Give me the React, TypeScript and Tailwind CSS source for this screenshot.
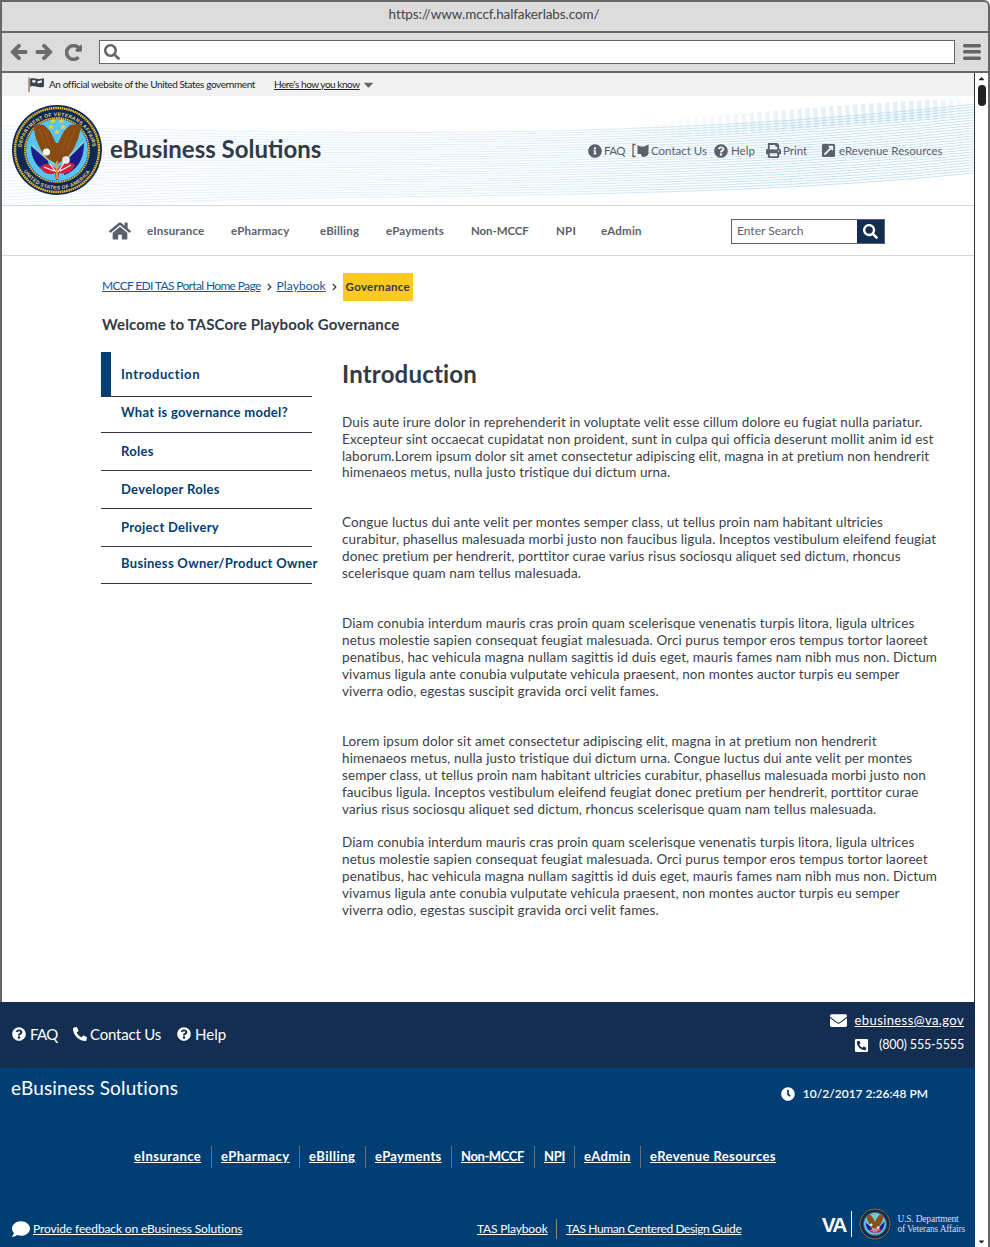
import React from "react";
import {
  FaArrowLeft, FaArrowRight, FaRedoAlt, FaSearch, FaInfoCircle, FaQuestionCircle, FaPrint,
  FaExternalLinkSquareAlt, FaHome, FaEnvelope, FaPhoneSquareAlt, FaPhoneAlt, FaClock, FaCaretDown, FaCaretUp, FaChevronRight, FaComment,
} from "react-icons/fa";

const Seal = ({ size, id, text = true }: { size: number; id: string; text?: boolean }) => (
  <svg width={size} height={size} viewBox="0 0 90 90" className="shrink-0">
    <circle cx="45" cy="45" r="45" fill="#0b2a55" />
    <circle cx="45" cy="45" r="42" fill="none" stroke="#f2b632" strokeWidth="2.4" strokeDasharray="1.6 0.6" />
    <circle cx="45" cy="45" r="32" fill="none" stroke="#f2b632" strokeWidth="1.8" strokeDasharray="1.6 0.6" />
    <circle cx="45" cy="45" r="31" fill="#57c4f5" />
    <path d="M19 41 L36 56 L38 68 C28 66 19 56 19 41Z" fill="#1c1c8a" />
    <path d="M72 38 L54 56 L52 70 C64 66 72 56 72 38Z" fill="#1c1c8a" />
    <path d="M20 40 L42 60 M71 37 L49 60" stroke="#e6cf7a" strokeWidth="0.9" />
    <path d="M45 59 L36 54 L29 45 L24 34 L21 19 L32 20 L38 26 L44 38 L46 38 L52 26 L58 20 L70 19 L66 34 L61 45 L54 54Z" fill="#8a4b12" />
    <path d="M27 24 L35 44 M33 25 L40 46 M63 24 L55 44 M57 25 L50 46" stroke="#a0601f" strokeWidth="0.7" />
    <circle cx="34.5" cy="47" r="3.6" fill="#f6f6f6" />
    <path d="M28 62 C33 57 39 58 45 65 C50 58 56 55 63 60 C60 67 54 70 47 68 L46 75 L44 75 L43 68 C37 71 31 68 28 62Z" fill="#d5203f" />
    <path d="M32 62 L42 66 M59 60 L48 66 M38 59 L44 67 M52 58 L46 67" stroke="#fff" strokeWidth="1.2" />
    <circle cx="54" cy="55" r="3.8" fill="#eee" />
    <path d="M45 56 L45 74" stroke="#e5a92a" strokeWidth="1.6" />
    <path d="M41 13l.9 1.900 2 .2-1.500 1.300.5 2-1.900-1.100-1.900 1.100.5-2-1.500-1.300 2-.2zM49.500 13l.9 1.900 2 .2-1.500 1.300.5 2-1.900-1.100-1.900 1.100.5-2-1.500-1.300 2-.2zM39 19l.9 1.900 2 .2-1.500 1.300.5 2-1.900-1.100-1.900 1.100.5-2-1.500-1.300 2-.2zM51 19l.9 1.900 2 .2-1.500 1.300.5 2-1.900-1.100-1.900 1.100.5-2-1.500-1.300 2-.2zM45 24l.9 1.900 2 .2-1.500 1.300.5 2-1.900-1.100-1.900 1.100.5-2-1.500-1.300 2-.2z" fill="#f2d040" />
    {text && (
      <>
        <defs>
          <path id={id + "t"} d="M9 47 A36 36 0 0 1 81 47" />
          <path id={id + "b"} d="M5.500 45 A39.500 39.500 0 0 0 84.500 45" />
        </defs>
        <text fontSize="5" fill="#e9d07a" fontFamily="'Liberation Sans', sans-serif" fontWeight="700" letterSpacing="0.3">
          <textPath href={`#${id}t`} startOffset="50%" textAnchor="middle">DEPARTMENT OF VETERANS AFFAIRS</textPath>
        </text>
        <text fontSize="5" fill="#e9d07a" fontFamily="'Liberation Sans', sans-serif" fontWeight="700" letterSpacing="0.3">
          <textPath href={`#${id}b`} startOffset="50%" textAnchor="middle">UNITED STATES OF AMERICA</textPath>
        </text>
      </>
    )}
  </svg>
);

const Waves = () => {
  const low: string[] = [];
  const N = 26;
  for (let i = 0; i <= N; i++) {
    const t = i / N;
    const l = (a: number, b: number) => a + (b - a) * t;
    low.push(`M0 ${l(30, 114)} C325 ${l(39, 92)} 650 ${l(44, 110)} 975 ${l(8, 77)}`);
  }
  return (
    <svg width="973" height="109" viewBox="0 0 975 109" className="absolute left-0 top-0">
      <defs>
        <linearGradient id="wl" gradientUnits="userSpaceOnUse" x1="0" y1="0" x2="975" y2="0">
          <stop offset="0" stopColor="#a9d5e9" stopOpacity="0.3" />
          <stop offset="0.55" stopColor="#a9d5e9" stopOpacity="0.5" />
          <stop offset="0.8" stopColor="#a9d5e9" stopOpacity="0.85" />
          <stop offset="1" stopColor="#a9d5e9" stopOpacity="0.8" />
        </linearGradient>
        <linearGradient id="wa" gradientUnits="userSpaceOnUse" x1="630" y1="0" x2="975" y2="0">
          <stop offset="0" stopColor="#d8e8f2" stopOpacity="0" />
          <stop offset="0.5" stopColor="#d8e8f2" stopOpacity="0.6" />
          <stop offset="0.85" stopColor="#d8e8f2" stopOpacity="0.7" />
          <stop offset="1" stopColor="#d8e8f2" stopOpacity="0" />
        </linearGradient>
      </defs>
      <path d="M630 36 C730 30 850 16 975 12" fill="none" stroke="url(#wa)" strokeWidth="20" strokeDasharray="4.500 3.500" />
      {low.map((d, i) => (
        <path key={i} d={d} fill="none" stroke="url(#wl)" strokeWidth="0.8" />
      ))}
    </svg>
  );
};

const P = ({ lines, className = "" }: { lines: string[]; className?: string }) => (
  <div className={className}>
    {lines.map((l) => (
      <div key={l} className="whitespace-nowrap h-[16.8px] leading-[16.8px]">{l}</div>
    ))}
  </div>
);

const diam = [
  "Diam conubia interdum mauris cras proin quam scelerisque venenatis turpis litora, ligula ultrices",
  "netus molestie sapien consequat feugiat malesuada. Orci purus tempor eros tempus tortor laoreet",
  "penatibus, hac vehicula magna nullam sagittis id duis eget, mauris fames nam nibh mus non. Dictum",
  "vivamus ligula ante conubia vulputate vehicula praesent, non montes auctor turpis eu semper",
  "viverra odio, egestas suscipit gravida orci velit fames.",
];

const side: [string, string][] = [
  ["What is governance model?", "h-[36px] pb-[4px]"],
  ["Roles", "h-[38px]"],
  ["Developer Roles", "h-[38px]"],
  ["Project Delivery", "h-[38px]"],
  ["Business Owner/Product Owner", "h-[37px] pb-[3px]"],
];

const navs: [string, string][] = [
  ["eInsurance", "w-[84px]"],
  ["ePharmacy", "w-[89px]"],
  ["eBilling", "w-[66px]"],
  ["ePayments", "w-[85px]"],
  ["Non-MCCF", "w-[85px] tracking-[-0.1px]"],
  ["NPI", "w-[45px]"],
  ["eAdmin", "w-[130px]"],
];

const footNav: [string, string][] = [
  ["eInsurance", "w-[77px] tracking-[0.45px]"],
  ["ePharmacy", "w-[88px] tracking-[0.5px]"],
  ["eBilling", "w-[66px] tracking-[0.5px]"],
  ["ePayments", "w-[86px] tracking-[0.35px]"],
  ["Non-MCCF", "w-[83px] tracking-[-0.4px]"],
  ["NPI", "w-[40px] tracking-[-0.3px]"],
  ["eAdmin", "w-[66px] tracking-[0.35px]"],
  ["eRevenue Resources", "w-[140px] tracking-[0.4px]"],
];

export default function App() {
  return (
    <div className="w-[990px] h-[1247px] overflow-hidden bg-white flex flex-col font-['Lato','Noto_Sans',sans-serif] text-[#323a45]">
      <div className="h-[33px] shrink-0 bg-[#dcdcdc] border-t-2 border-x-2 border-b-2 border-[#666] rounded-tr-[6px] flex justify-center items-center pb-[5px]">
        <span className="text-[13.5px] tracking-[-0.1px] text-[#444] -ml-[2px]">https://www.mccf.halfakerlabs.com/</span>
      </div>
      <div className="h-[40px] shrink-0 bg-[#dcdcdc] border-x-2 border-b-2 border-[#666] flex items-center text-[#6b6b6b]">
        <FaArrowLeft className="ml-[8px] w-[18px] h-[18px] [stroke-width:30]" />
        <FaArrowRight className="ml-[7px] w-[18px] h-[18px] [stroke-width:30]" />
        <FaRedoAlt className="ml-[12px] w-[17px] h-[17px] [stroke-width:30]" />
        <div className="ml-[17px] w-[856px] h-[24px] bg-white border border-[#666] flex items-center pl-[4px]">
          <FaSearch className="w-[16px] h-[16px] text-[#666]" />
        </div>
        <svg width="18" height="16" viewBox="0 0 18 16" className="ml-[8px] shrink-0" fill="#666">
          <rect x="0" y="0" width="18" height="3.600" rx="1.500" />
          <rect x="0" y="6" width="18" height="3.600" rx="1.500" />
          <rect x="0" y="12.400" width="18" height="3.600" rx="1.500" />
        </svg>
      </div>
      <div className="flex-1 flex min-h-0 border-l-2 border-[#666]">
        <div className="w-[972px] flex flex-col min-h-0 border-r border-[#333] box-content">
          <div className="h-[23px] shrink-0 bg-[#f1f1f1] flex items-center pl-[26px] text-[10px] text-[#222]">
            <svg width="17" height="15" viewBox="0 0 16 14" className="shrink-0">
              <path d="M1 0.5 V14" stroke="#8a6a3a" strokeWidth="1.200" />
              <path d="M2 1.500 C5 0 8 3 15 1 V9 C9 11 6 7 2 9Z" fill="#39424d" />
              <path d="M4 3h3v2H4zM9 4l4-1v2l-4 1z" fill="#fff" />
            </svg>
            <span className="ml-[4px] whitespace-nowrap w-[225px] tracking-[-0.4px]">An official website of the United States government</span>
            <span className="underline whitespace-nowrap tracking-[-0.45px]">Here's how you know</span>
            <FaCaretDown className="ml-[1px] w-[15px] h-[15px] text-[#666]" />
          </div>
          <div className="relative h-[110px] shrink-0 flex items-center border-b border-[#d6d7d9] overflow-hidden">
            <Waves />
            <div className="relative ml-[10px] -mt-[1px]"><Seal size={90} id="a" /></div>
            <h1 className="relative ml-[8px] -mt-[4px] text-[24px] font-bold text-[#323a45] whitespace-nowrap">eBusiness Solutions</h1>
            <div className="absolute left-[586px] top-[46px] flex items-center text-[11.5px] text-[#5b616b] whitespace-nowrap">
              <FaInfoCircle className="w-[14px] h-[14px] shrink-0" />
              <span className="ml-[2px] w-[28px] tracking-[-0.6px]">FAQ</span>
              <svg width="18" height="15" viewBox="0 0 18 15" className="shrink-0">
                <path d="M3.500 1.500H1V13.500H3.500" fill="none" stroke="#7a5b3b" strokeWidth="1.300" />
                <path d="M5.500 2c2 1 3 1.500 5 1.500S14.500 3 16.500 1V11c-1 2-3 3-5.500 3-1 0-2-2-2-3H5.500z" fill="#5b616b" />
              </svg>
              <span className="ml-[1px] w-[63px]">Contact Us</span>
              <FaQuestionCircle className="w-[14px] h-[14px] shrink-0" />
              <span className="ml-[3px] w-[35px]">Help</span>
              <FaPrint className="w-[15px] h-[15px] shrink-0" />
              <span className="ml-[2px] w-[38px]">Print</span>
              <FaExternalLinkSquareAlt className="w-[15px] h-[15px] shrink-0" />
              <span className="ml-[3px]">eRevenue Resources</span>
            </div>
          </div>
          <div className="h-[50px] shrink-0 flex items-center border-b border-[#d6d7d9] text-[#5b616b]">
            <FaHome className="ml-[107px] w-[22px] h-[20px] shrink-0" />
            <div className="ml-[16px] flex text-[11.5px] font-bold tracking-[0.2px]">
              {navs.map(([n, w]) => (
                <span key={n} className={w}>{n}</span>
              ))}
            </div>
            <div className="w-[154px] h-[25px] mt-[1px] border border-[#5b616b] flex items-center">
              <span className="flex-1 pl-[5px] text-[12px] text-[#5b616b]">Enter Search</span>
              <div className="w-[27px] h-full bg-[#112e51] flex items-center justify-center">
                <FaSearch className="w-[15px] h-[15px] text-white" />
              </div>
            </div>
          </div>
          <div className="flex-1 min-h-0 pl-[100px] pt-[17px]">
            <div className="flex items-center h-[28px] text-[12px]">
              <a className="mb-[2px] underline text-[#0b5a9c] whitespace-nowrap tracking-[-0.65px]">MCCF EDI TAS Portal Home Page</a>
              <FaChevronRight className="ml-[5px] w-[7px] h-[8px] text-[#333]" />
              <a className="mb-[2px] ml-[4px] underline text-[#0b5a9c] tracking-[0.1px]">Playbook</a>
              <FaChevronRight className="ml-[5px] w-[7px] h-[8px] text-[#333]" />
              <span className="ml-[5px] w-[70px] h-[28px] bg-[#fdc822] flex items-center justify-center text-[11.5px] font-bold text-[#323a45] tracking-[0.3px]">Governance</span>
            </div>
            <h2 className="mt-[13px] h-[20px] leading-[20px] text-[15px] font-bold text-[#323a45] whitespace-nowrap tracking-[0.15px]">Welcome to TASCore Playbook Governance</h2>
            <div className="mt-[18px] flex">
              <div className="w-[211px] shrink-0 -ml-[1px] text-[13px] font-bold text-[#003e73] tracking-[0.3px]">
                <div className="h-[45px] border-b border-[#323a45] relative flex items-center pl-[20px] pt-[1px] whitespace-nowrap tracking-[0.6px]">
                  <span className="absolute left-0 top-0 bottom-0 w-[10px] bg-[#003e73]" />
                  Introduction
                </div>
                {side.map(([s, c]) => (
                  <div key={s} className={`${c} border-b border-[#323a45] flex items-center pl-[20px] whitespace-nowrap`}>{s}</div>
                ))}
              </div>
              <div className="ml-[30px] w-[600px] text-[13.5px] tracking-[0.1px] text-[#3a3f47]">
                <h2 className="h-[45px] leading-[44px] text-[24px] font-bold whitespace-nowrap tracking-[0.2px] text-[#323a45]">Introduction</h2>
                <P className="mt-[17px]" lines={[
                  "Duis aute irure dolor in reprehenderit in voluptate velit esse cillum dolore eu fugiat nulla pariatur.",
                  "Excepteur sint occaecat cupidatat non proident, sunt in culpa qui officia deserunt mollit anim id est",
                  "laborum.Lorem ipsum dolor sit amet consectetur adipiscing elit, magna in at pretium non hendrerit",
                  "himenaeos metus, nulla justo tristique dui dictum urna.",
                ]} />
                <P className="mt-[33px]" lines={[
                  "Congue luctus dui ante velit per montes semper class, ut tellus proin nam habitant ultricies",
                  "curabitur, phasellus malesuada morbi justo non faucibus ligula. Inceptos vestibulum eleifend feugiat",
                  "donec pretium per hendrerit, porttitor curae varius risus sociosqu aliquet sed dictum, rhoncus",
                  "scelerisque quam nam tellus malesuada.",
                ]} />
                <P className="mt-[34px]" lines={diam} />
                <P className="mt-[34px]" lines={[
                  "Lorem ipsum dolor sit amet consectetur adipiscing elit, magna in at pretium non hendrerit",
                  "himenaeos metus, nulla justo tristique dui dictum urna. Congue luctus dui ante velit per montes",
                  "semper class, ut tellus proin nam habitant ultricies curabitur, phasellus malesuada morbi justo non",
                  "faucibus ligula. Inceptos vestibulum eleifend feugiat donec pretium per hendrerit, porttitor curae",
                  "varius risus sociosqu aliquet sed dictum, rhoncus scelerisque quam nam tellus malesuada.",
                ]} />
                <P className="mt-[17px]" lines={diam} />
              </div>
            </div>
          </div>
          <div className="h-[66px] shrink-0 -ml-[2px] -mr-[1px] bg-[#132e51] text-white flex justify-between pl-[12px] pr-[11px]">
            <div className="flex items-center text-[15px] mt-[-2px] whitespace-nowrap">
              <FaQuestionCircle className="w-[14px] h-[14px] shrink-0" />
              <span className="ml-[4px] w-[43px] tracking-[-0.6px]">FAQ</span>
              <FaPhoneAlt className="w-[14px] h-[14px] shrink-0" />
              <span className="ml-[3px] w-[87px] tracking-[-0.2px]">Contact Us</span>
              <FaQuestionCircle className="w-[14px] h-[14px] shrink-0" />
              <span className="ml-[4px]">Help</span>
            </div>
            <div className="flex flex-col items-end pt-[10px] text-[13px]">
              <div className="flex items-center h-[17px]">
                <FaEnvelope className="w-[17px] h-[17px] shrink-0" />
                <span className="ml-[8px] underline tracking-[0.4px]">ebusiness@va.gov</span>
              </div>
              <div className="flex items-center h-[17px] mt-[8px]">
                <FaPhoneSquareAlt className="w-[15px] h-[15px] shrink-0" />
                <span className="ml-[10px] text-[12.5px] tracking-[-0.15px]">(800) 555-5555</span>
              </div>
            </div>
          </div>
          <div className="h-[179px] shrink-0 -ml-[2px] -mr-[1px] bg-[#003e73] text-white flex flex-col">
            <div className="flex justify-between h-[58px] pl-[11px] pr-[47px]">
              <span className="text-[19px] leading-[24px] pt-[8px] box-content h-[24px] tracking-[0.15px] whitespace-nowrap">eBusiness Solutions</span>
              <div className="flex items-center self-start mt-[17px] text-[12px] font-semibold whitespace-nowrap">
                <FaClock className="w-[14px] h-[14px]" />
                <span className="ml-[8px]">10/2/2017 2:26:48 PM</span>
              </div>
            </div>
            <div className="mt-[20px] h-[22px] pl-[134px] flex items-center text-[13px] font-bold">
              {footNav.map(([n, w], i) => (
                <span key={n} className={`${w} h-[22px] flex items-center whitespace-nowrap ${i === 0 ? "" : "border-l border-[#6b7078] pl-[9px]"}`}><span className="underline">{n}</span></span>
              ))}
            </div>
            <div className="flex-1 flex items-end pl-[12px] pr-[10px] pb-[7px]">
              <div className="flex items-center text-[12px] w-[465px] mb-[2px] tracking-[-0.13px]">
                <FaComment className="w-[18px] h-[18px] shrink-0" />
                <span className="ml-[3px] underline whitespace-nowrap">Provide feedback on eBusiness Solutions</span>
              </div>
              <div className="flex items-center text-[12px] mb-[1px] whitespace-nowrap">
                <span className="w-[80px] border-r border-[#8a8a7a] h-[20px] flex items-center"><span className="underline tracking-[-0.15px]">TAS Playbook</span></span>
                <span className="underline pl-[9px] tracking-[-0.4px]">TAS Human Centered Design Guide</span>
              </div>
              <div className="ml-auto flex items-center">
                <span className="text-[21px] font-['Liberation_Sans',sans-serif] font-bold tracking-[-2px] leading-none pr-[6px]">VA</span>
                <span className="w-px h-[26px] bg-white" />
                <span className="ml-[7px]"><Seal size={32} id="b" text={false} /></span>
                <span className="ml-[6px] font-['Liberation_Serif',serif] text-[9.5px] leading-[10px] whitespace-nowrap text-[#dde] tracking-[-0.2px]">U.S. Department<br />of Veterans Affairs</span>
              </div>
            </div>
          </div>
        </div>
        <div className="flex-1 flex flex-col items-center border-r-2 border-[#666] text-[#222] relative bg-white">
          <FaCaretUp className="w-[11px] h-[9px] mt-[1px]" />
          <div className="w-[8px] h-[21px] rounded-[4px] bg-[#222] mt-[2px]" />
          <FaCaretDown className="w-[11px] h-[9px] mt-auto mb-[1px]" />
        </div>
      </div>
    </div>
  );
}
